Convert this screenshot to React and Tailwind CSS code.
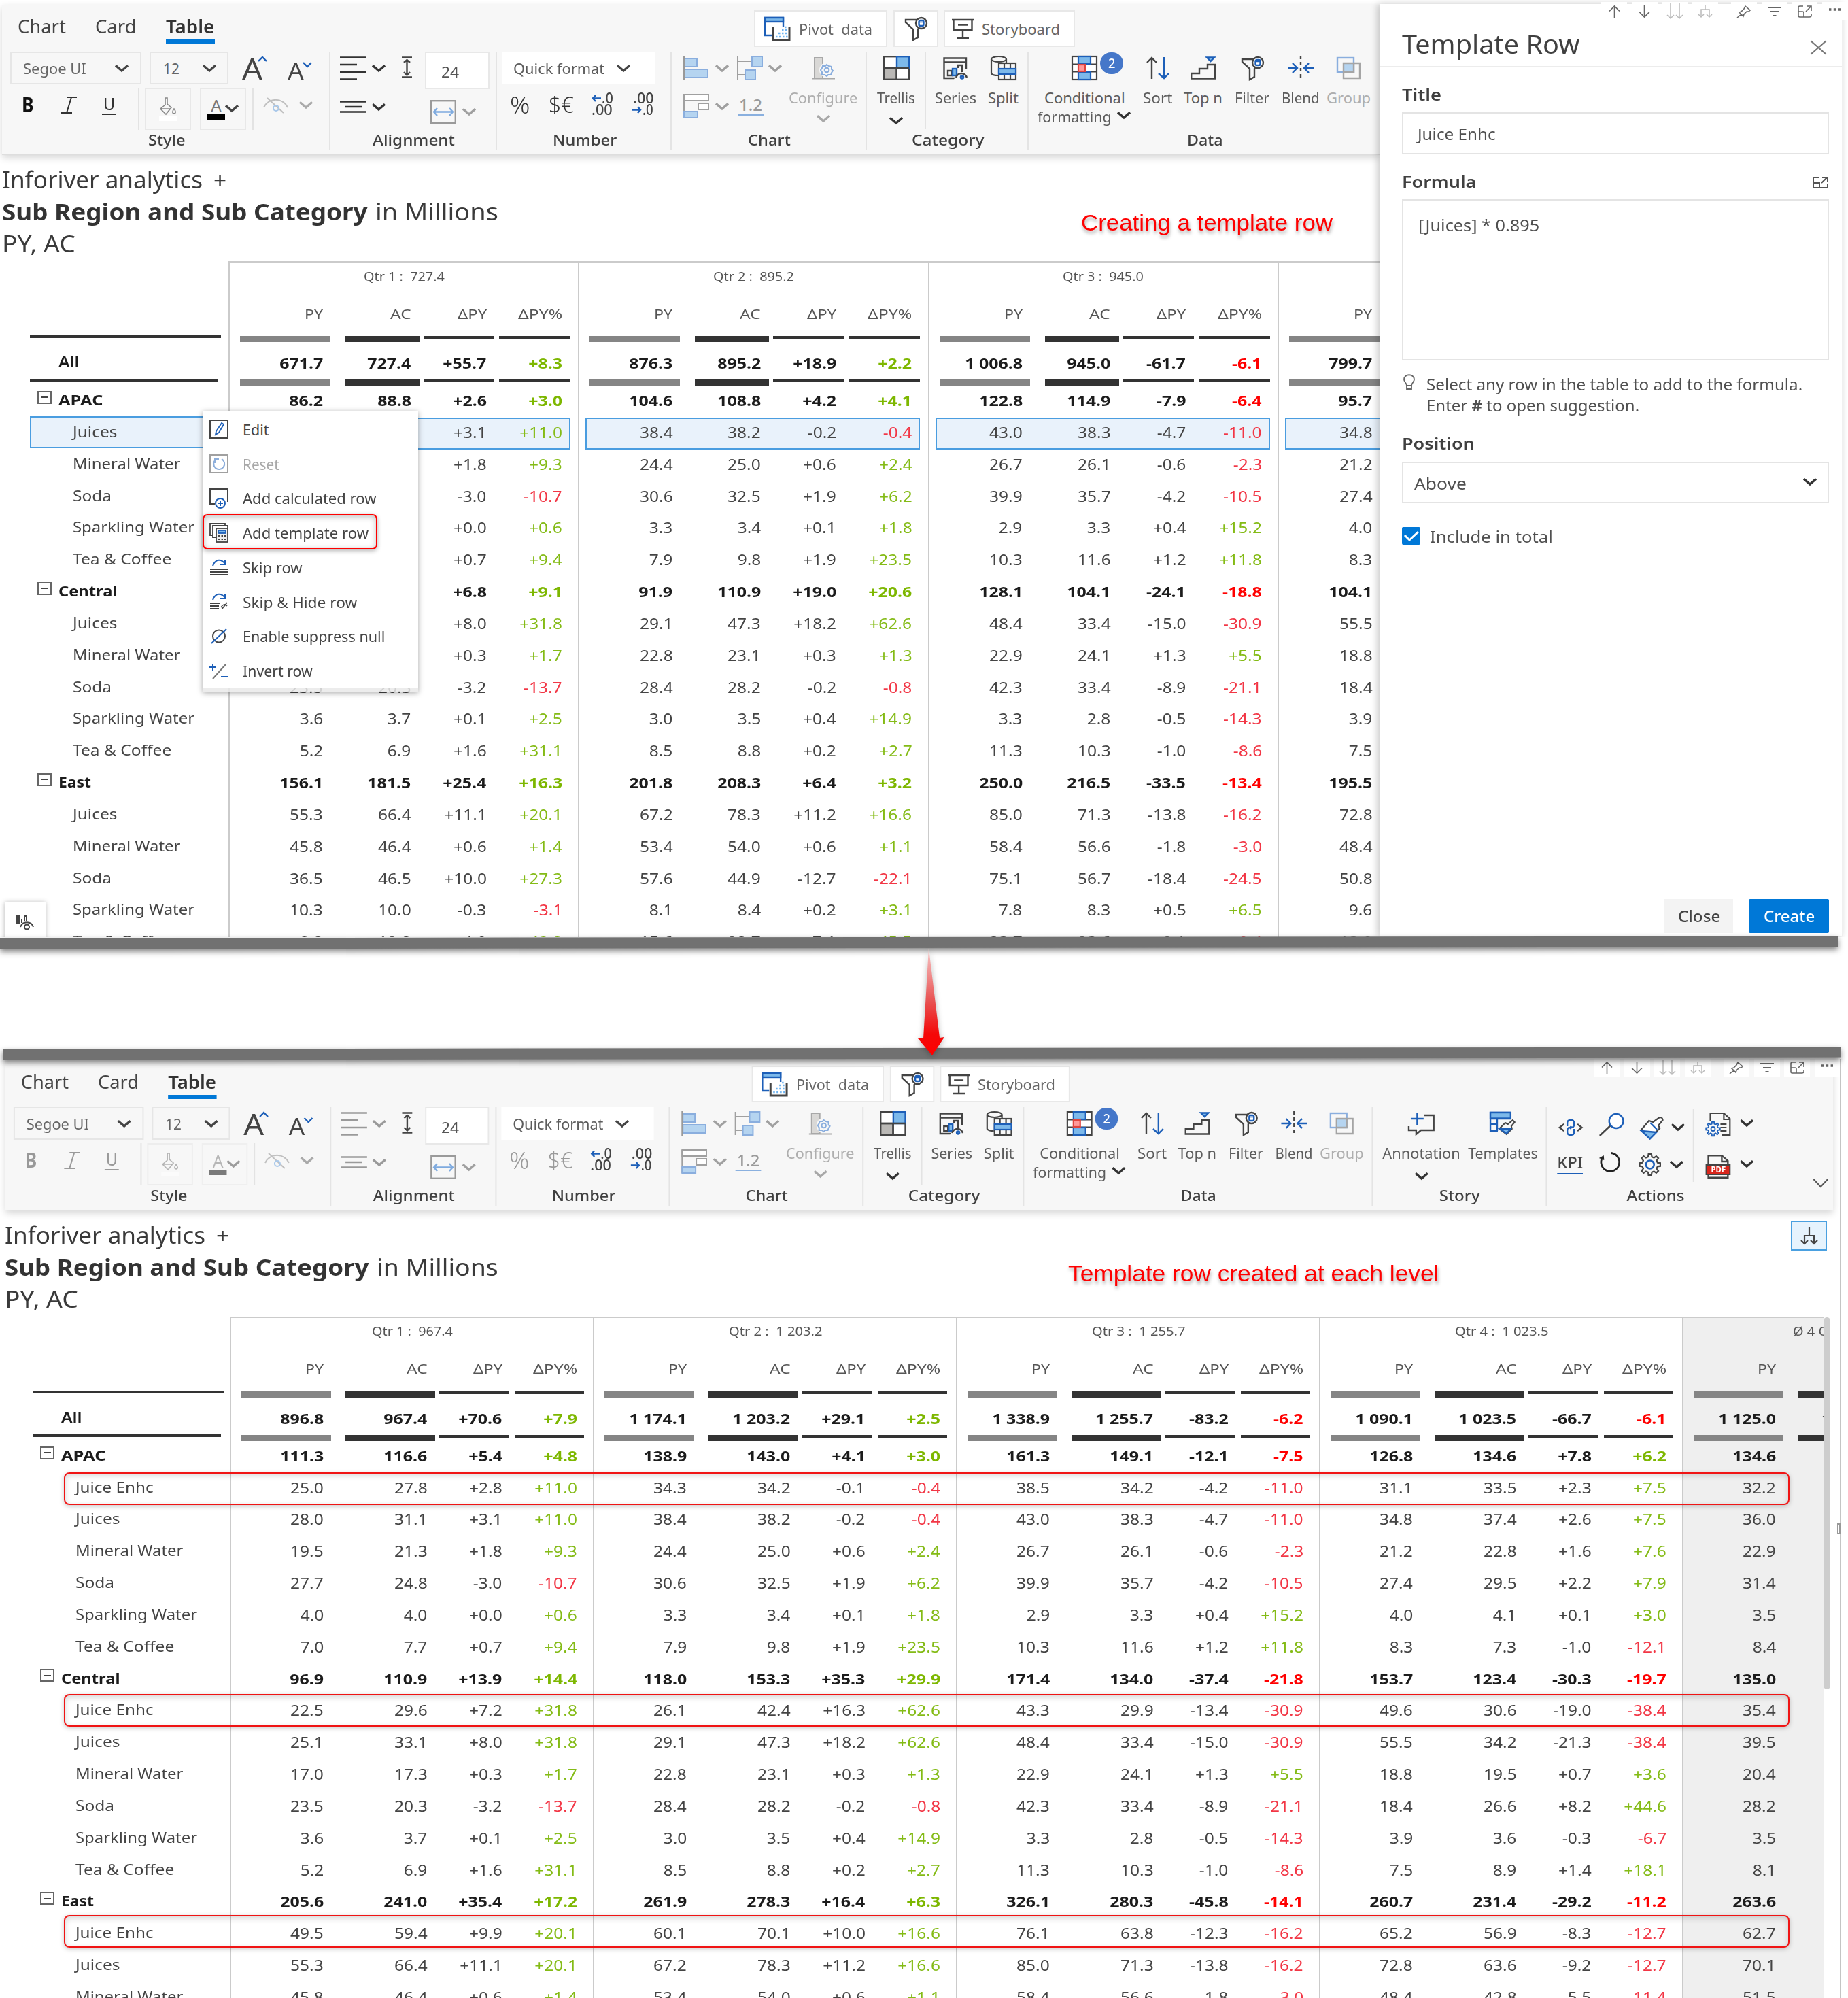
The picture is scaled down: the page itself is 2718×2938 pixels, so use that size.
import React, { useLayoutEffect, useRef } from "react";

/* Text stretched horizontally so that it spans exactly w pixels. */
function T({ w, className = "", children }) {
  const ref = useRef(null);
  useLayoutEffect(() => {
    ref.current.style.transform = `scaleX(${w / ref.current.offsetWidth})`;
  }, [w, children]);
  return (
    <span className={`inline-block shrink-0 whitespace-pre leading-none ${className}`} style={{ width: w }}>
      <span ref={ref} className="inline-block origin-left">{children}</span>
    </span>
  );
}

function Svg({ w, h, sw = 2.4, className = "", children }) {
  return (
    <svg width={w} height={h} viewBox={`0 0 ${w} ${h}`} fill="none" stroke="currentColor" strokeWidth={sw} className={`shrink-0 overflow-visible ${className}`}>
      {children}
    </svg>
  );
}

const Chev = ({ className = "" }) => (
  <Svg w={20} h={11} sw={3.4} className={className}><path d="M1 1.2 L10 9 L19 1.2" /></Svg>
);

const BLUE = "#1d5fb8";
const SKY = "#7db9ea";

/* ---------- ribbon icons ---------- */
const PivotIcon = () => (
  <Svg w={40} h={37} className="text-[#1d5fb8]">
    <path d="M12 28 H2 V2 H29 V15" /><rect x="2" y="2" width="27" height="6" fill={SKY} />
    <path d="M14 16 V35 H38 V16" stroke="#444" strokeWidth="3" />
    <path d="M18 30 H36 M22 25 H36 M27 20 H36 M31 16 H36" stroke="#6db3f0" strokeDasharray="2.5 2.5" />
  </Svg>
);
const FunnelIcon = () => (
  <Svg w={34} h={35} className="text-[#444]">
    <path d="M19 4 H2 V8 L13 18 V34 L20 30 V18 L22 15" />
    <circle cx="25" cy="9" r="8" fill="#fff" />
    <rect x="21.5" y="5" width="7" height="8" rx="2" stroke={BLUE} /><path d="M21.5 7.5 H28.5" stroke={BLUE} strokeWidth="1.5" />
  </Svg>
);
const BoardIcon = () => (
  <Svg w={32} h={31} className="text-[#444]">
    <path d="M0 2 H32 M2.5 2 V17 H29.5 V2 M9 9.5 H23 M16 17 V29 M7 29 H25" />
  </Svg>
);
const FillIcon = () => (
  <Svg w={26} h={36} sw={1.6} className="text-[#888]">
    <path d="M9 2 V12 L2 18 L10 26 L18 16 L12 11 V2 Z M3 18 H17" /><path d="M22 18 C19 22 19 24 22 25 C25 24 25 22 22 18Z" />
    <rect x="0" y="29" width="26" height="7" fill="#fff" stroke="none" />
  </Svg>
);
const EyeIcon = () => (
  <Svg w={37} h={24} sw={2} className="text-[#c0c0c0]">
    <path d="M1 15 C8 0 29 0 36 15 M6 1 L30 23" /><circle cx="19" cy="16" r="4" stroke="#a9c8ea" />
  </Svg>
);
const LinesIcon = ({ center }) => (
  <Svg w={39} h={center ? 18 : 35}>
    {center ? <path d="M0 1.5 H39 M7 9 H32 M0 16.5 H39" /> : <path d="M0 1.5 H39 M0 12 H25 M0 23 H39 M0 33.5 H25" />}
  </Svg>
);
const HeightIcon = () => (
  <Svg w={15} h={32} sw={2.4} className="text-[#444]"><path d="M0 1.5 H15 M0 30.5 H15 M7.5 5 V27 M3 9 L7.5 5 L12 9 M3 23 L7.5 27.5 L12 23" /></Svg>
);
const MergeIcon = () => (
  <Svg w={38} h={35} className="text-[#9a9a9a]">
    <rect x="1.2" y="1.2" width="35.6" height="32.6" /><path d="M5 17.5 H33 M10 12 L5 17.5 L10 23 M28 12 L33 17.5 L28 23" stroke="#7fabdf" />
  </Svg>
);
const DecimalIcon = ({ more }) => (
  <div className="flex w-[32px] shrink-0 flex-col text-[#444]">
    <div className="flex h-[17px] items-center justify-end">
      {more ? <Svg w={13} h={11} className="mr-px text-[#1d5fb8]"><path d="M0 5.5 H13 M5 1 L1 5.5 L5 10" /></Svg> : null}
      <T w={more ? 17 : 31} className="text-[21px] font-medium">{more ? ".0" : ".00"}</T>
    </div>
    <div className="flex h-[17px] items-center">
      {more ? null : <Svg w={13} h={11} className="mr-[2px] text-[#1d5fb8]"><path d="M0 5.5 H12 M8 1 L12 5.5 L8 10" /></Svg>}
      <T w={more ? 31 : 16} className="text-[21px] font-medium">{more ? ".00" : ".0"}</T>
    </div>
  </div>
);
const BarsIcon = () => (
  <Svg w={37} h={36} sw={2} className="text-[#8aaede]">
    <rect x="2" y="4" width="18" height="12" fill="#b5d4f0" /><rect x="2" y="20" width="34" height="12" fill="#b5d4f0" /><path d="M1 0 V36" stroke="#999" />
  </Svg>
);
const TreeIcon = ({ className }) => (
  <Svg w={38} h={36} sw={2} className={`text-[#8aaede] ${className}`}>
    <path d="M1 1 V35 M1 8 H22 M1 28 H12" stroke="#a0a0a0" /><rect x="22" y="1" width="15" height="15" fill="#b5d4f0" /><rect x="12" y="21" width="15" height="14" fill="#b5d4f0" />
  </Svg>
);
const LayoutIcon = () => (
  <Svg w={38} h={36} sw={2} className="text-[#a0a0a0]">
    <rect x="1" y="1" width="36" height="9" fill="#fff" /><rect x="22" y="14" width="15" height="9" fill="#fff" /><path d="M1 1 V35" /><rect x="1" y="26" width="20" height="9" stroke="#8aaede" fill="#b5d4f0" />
  </Svg>
);
const ConfigIcon = () => (
  <Svg w={34} h={33} sw={2} className="text-[#a8a8a8]">
    <rect x="4" y="1" width="12" height="30" fill="#d9d8d6" /><path d="M0 31.5 H34" /><circle cx="22" cy="19" r="11" fill="#f7f7f7" stroke="none" />
    <path d="M22 11 L25 13 L29 14 V18 L31 20 L29 23 L28 26 L24 26 L22 28 L19 26 L15 26 V22 L13 19 L15 16 L16 13 L20 13 Z" stroke="#8aaede" /><circle cx="22" cy="19" r="3.3" stroke="#8aaede" />
  </Svg>
);
const TrellisIcon = () => (
  <Svg w={39} h={36} className="text-[#444]">
    <rect x="1.2" y="1.2" width="36.6" height="33.6" fill="#fff" /><rect x="1.2" y="18" width="18.5" height="16.8" fill="#bab8b5" />
    <rect x="20" y="1.2" width="17.8" height="16.8" fill={SKY} stroke={BLUE} /><path d="M19.7 18 V35 M1 18 H38" />
  </Svg>
);
const SeriesIcon = () => (
  <Svg w={37} h={33} className="text-[#444]">
    <path d="M18 31 H1.5 V1.5 H34 V18 M1.5 7.5 H34 M7 27 V20 H13 V27 Z M22 16 V12 H28 V22" /><rect x="14" y="17" width="6" height="10" fill={SKY} stroke={BLUE} />
    <path d="M16 33 C20 22 33 22 37 33 Z" fill="#f7f7f7" stroke="none" /><path d="M19 30 C22 22 32 22 35 30" /><circle cx="28" cy="29.5" r="1.8" stroke={BLUE} strokeWidth="3" />
  </Svg>
);
const SplitIcon = () => (
  <Svg w={38} h={36} sw={2.2} className="text-[#444]">
    <ellipse cx="12" cy="5" rx="11" ry="4" /><path d="M1 5 V26 C2 28 6 29 11 29 M23 5 V11" />
    <rect x="12" y="11" width="25" height="24" fill="#f7f7f7" /><path d="M20 11 V35 M29 11 V35" /><rect x="12" y="19" width="25" height="8" fill={SKY} stroke={BLUE} />
  </Svg>
);
const CondIcon = () => (
  <Svg w={38} h={36} sw={2.2} className="text-[#444]">
    <rect x="1" y="1" width="36" height="34" fill="#fff" /><path d="M1 12.5 H37 M1 23.5 H37" />
    <rect x="10" y="1" width="18" height="11" fill={SKY} stroke={BLUE} /><rect x="10" y="24" width="18" height="11" fill={SKY} stroke={BLUE} /><rect x="10" y="13" width="10" height="10" fill="#ff9a9a" stroke="#e0443e" />
  </Svg>
);
const SortIcon = () => (
  <Svg w={34} h={34} className="text-[#444]"><path d="M8 33 V2 M1 9 L8 2 L15 9" /><path d="M26 1 V31 M18 25 L26 32 L33 25" stroke={BLUE} /></Svg>
);
const TopIcon = () => (
  <Svg w={38} h={34} className="text-[#444]"><path d="M1.2 32.5 V25 H13 V18 H25 V12 H36 V32.5 Z" /><path d="M24 1.5 H35 L29.5 7 Z" stroke={BLUE} fill={SKY} /></Svg>
);
const BlendIcon = () => (
  <Svg w={40} h={36} className="text-[#1d5fb8]"><path d="M20 0 V36" stroke="#444" strokeDasharray="5 4" /><path d="M1 18 H14 M8 11 L15 18 L8 25 M39 18 H26 M32 11 L25 18 L32 25" /></Svg>
);
const GroupIcon = () => (
  <Svg w={35} h={32} className="text-[#a5a5a5]"><rect x="1" y="1" width="24" height="21" stroke="#8aaede" /><rect x="10" y="9" width="15" height="13" fill="#b5d4f0" stroke="none" /><path d="M10 9 H34 V31 H10 Z M25 9 V22 H10" /></Svg>
);
const AnnotIcon = () => (
  <Svg w={39} h={33} className="text-[#444]"><path d="M24 4 H38 V26 H19 L12 32 V26 H1 V20" /><path d="M4 9 H23 M13.5 0 V18" stroke={BLUE} /></Svg>
);
const TemplIcon = () => (
  <Svg w={39} h={34} className="text-[#1d5fb8]">
    <path d="M1 1 V28 H12 M11 9 V28 M1 18 H11 M1 9 V1 H31 V10 H1" /><rect x="1" y="1" width="30" height="8.5" fill={SKY} />
    <path d="M14 25 L23 16 L27 18 L34 12 L37 15 L32 21 L33 25 L25 33 Z" fill="#f7f7f7" stroke="#444" strokeWidth="2" /><path d="M15 25 H31 L25 32 Z" fill={SKY} />
  </Svg>
);
const CodeIcon = () => (
  <Svg w={36} h={24} className="text-[#444]"><path d="M8 7 L1.5 12 L8 17 M28 7 L34.5 12 L28 17" /><path d="M13 10 V5 Q13 1 18 1 Q23 1 23 5 V8 Q23 12 19 12 L17 14 M23 14 V19 Q23 23 18 23 Q13 23 13 19 V16 Q13 12 17 12 L19 10" stroke={BLUE} /></Svg>
);
const SearchIcon = () => (
  <Svg w={37} h={34} className="text-[#444]"><path d="M1 33 L17 18" /><circle cx="25.5" cy="11.5" r="10.5" stroke={BLUE} fill="#fff" /></Svg>
);
const BrushIcon = () => (
  <Svg w={36} h={34} className="text-[#444]">
    <path d="M2 20 L14 6 L20 8 L29 1.5 Q34 0 34.5 5 L28 13 L30 17 L16 31 Z" fill="#fff" strokeWidth="2.2" /><path d="M3 21 L25 23 L15.5 32.5 Z" fill={SKY} stroke={BLUE} /><path d="M16 9 L26 19" stroke={BLUE} />
  </Svg>
);
const RefreshIcon = () => (
  <Svg w={33} h={30} sw={2.8} className="text-[#222]"><path d="M18 1.5 A13.5 13.5 0 1 1 5 8" /><path d="M0 9 L7 5 L7.5 12 Z" fill="#222" stroke="none" /></Svg>
);
function gearPath(cx, cy, r1, r2, n) {
  const p = [];
  for (let i = 0; i < n; i++) {
    const a = (i / n) * Math.PI * 2;
    const s = Math.PI / n;
    [[-0.62, r1], [-0.36, r2], [0.36, r2], [0.62, r1]].forEach(([k, r]) => p.push(`${(cx + r * Math.cos(a + k * s)).toFixed(1)} ${(cy + r * Math.sin(a + k * s)).toFixed(1)}`));
  }
  return `M${p.join("L")}Z`;
}
const GearIcon = () => (
  <Svg w={35} h={31} sw={2.2} className="text-[#444]"><path d={gearPath(17.5, 15.5, 11.5, 15.5, 8)} /><circle cx="17.5" cy="15.5" r="6" stroke={BLUE} strokeWidth="2.6" /></Svg>
);
const DocIcon = () => (
  <Svg w={37} h={34} sw={2.2} className="text-[#444]">
    <path d="M7 12 V1 H27 L36 9 V33 H24 M27 1 V10 H36 M22 17 H31 M22 22 H31 M22 27 H31" /><path d={gearPath(11, 24, 7.5, 10.5, 8)} stroke={BLUE} strokeWidth="1.8" /><circle cx="11" cy="24" r="3" stroke={BLUE} strokeWidth="1.8" />
  </Svg>
);
const PdfIcon = () => (
  <div className="relative h-[35px] w-[37px] shrink-0">
    <Svg w={37} h={35} sw={2.4} className="text-[#444]">
      <path d="M4 16 V1.2 H24 L33 9 V16 M24 1 V10 H33 M4 28 V33.8 H33 V28" /><rect x="1" y="15" width="35" height="14" fill="#d9261c" strokeWidth="2" />
    </Svg>
    <T w={22} className="absolute left-[8px] top-[16px] text-[12px] font-bold text-white">PDF</T>
  </div>
);

/* ---------- ribbon ---------- */
function Group({ label, lw, className, labelClass = "", last, children }) {
  return (
    <div className={`flex h-[145px] shrink-0 flex-col ${last ? "" : "border-r-2 border-[#e4e4e4]"} ${className}`}>
      <div className="h-[119px]">{children}</div>
      <div className={`flex h-[22px] items-center justify-center text-[#404040] ${labelClass}`}><T w={lw} className="text-[21.5px] font-medium">{label}</T></div>
    </div>
  );
}
const Row1 = ({ children }) => <div className="flex h-[48px] items-center">{children}</div>;
const Row2 = ({ children }) => <div className="flex h-[71px] items-center">{children}</div>;

function Tool({ icon, label, w, className = "", muted, chev }) {
  return (
    <div className={`flex shrink-0 flex-col items-center ${className}`}>
      <div className="flex h-[48px] items-center">{icon}</div>
      <T w={w} className={`mt-[8px] text-[22px] ${muted ? "text-[#aeaeae]" : "text-[#5c5c5c]"}`}>{label}</T>
      {chev ? <Chev className={`${muted ? "mt-[15px] text-[#a8a8a8]" : "mt-[18px] text-[#333]"}`} /> : null}
    </div>
  );
}

function Ribbon({ full }) {
  const ink = full ? "text-[#9a9a9a]" : "text-[#333]";
  return (
    <div className={`h-[221px] origin-left border-b border-[#dedede] bg-[#f7f7f7] shadow-[0_4px_10px_rgba(0,0,0,0.16)] ${full ? "w-[2709px] scale-x-[0.9923]" : "w-[2026px]"}`}>
      <div className="flex h-[69px] items-start text-[27px] text-[#444]">
        <T w={71} className="ml-[23px] mt-[18px]">Chart</T>
        <T w={60} className="ml-[43px] mt-[18px]">Card</T>
        <div className="ml-[44px] mt-[18px] flex flex-col">
          <T w={71} className="font-semibold text-[#333]">Table</T>
          <div className="mt-[6px] h-[6px] w-[72px] bg-[#0078d7]" />
        </div>
        <div className="ml-[793px] mt-[8px] flex h-[54px] w-[196px] items-center border-2 border-[#e8e8e8] bg-white pl-[12px] text-[22px] text-[#666]">
          <PivotIcon /><T w={108} className="ml-[12px]">Pivot  data</T>
        </div>
        <div className="ml-[9px] mt-[8px] flex h-[54px] w-[66px] items-center justify-center border-2 border-[#e8e8e8] bg-white"><FunnelIcon /></div>
        <div className="ml-[8px] mt-[8px] flex h-[54px] w-[193px] items-center border-2 border-[#e8e8e8] bg-white pl-[10px] text-[22px] text-[#666]">
          <BoardIcon /><T w={115} className="ml-[12px]">Storyboard</T>
        </div>
      </div>

      <div className="flex">
        <Group label="Style" lw={55} className="w-[483px]" labelClass="pl-[4px]">
          <Row1>
            <div className="ml-[12px] flex h-[48px] w-[193px] items-center border-2 border-[#e6e6e6] pl-[17px] text-[21px] text-[#666]"><T w={93} className="mt-[2px]">Segoe UI</T><Chev className="ml-[42px] text-[#444]" /></div>
            <div className="ml-[12px] flex h-[48px] w-[116px] items-center border-2 border-[#e6e6e6] pl-[18px] text-[21px] text-[#666]"><T w={24} className="mt-[2px]">12</T><Chev className="ml-[34px] text-[#444]" /></div>
            <T w={30} className="ml-[20px] text-[44px] text-[#444]">A</T><Svg w={14} h={8} className="-ml-[7px] -mt-[27px] text-[#1d5fb8]"><path d="M1 7 L7 1 L13 7" /></Svg>
            <T w={24} className="ml-[30px] mt-[8px] text-[34px] text-[#444]">A</T><Svg w={14} h={8} className="-ml-[2px] -mt-[11px] text-[#1d5fb8]"><path d="M1 1 L7 7 L13 1" /></Svg>
          </Row1>
          <Row2>
            <T w={18} className={`-mt-[12px] ml-[29px] text-[31px] font-bold ${full ? "text-[#999]" : "text-[#111]"}`}>B</T>
            <Svg w={23} h={25} sw={2} className={`-mt-[10px] ml-[40px] ${ink}`}><path d="M8 1 H23 M0 24 H16 M15 1 L8 24" /></Svg>
            <div className={`-mt-[10px] ml-[37px] flex w-[21px] flex-col items-center border-b-2 border-current pb-[2px] ${ink}`}><T w={17} className="text-[25px] leading-[21px]">U</T></div>
            <div className="ml-[32px] h-[62px] w-[2px] bg-[#e3e3e3]" />
            <div className={`ml-[8px] flex h-[62px] w-[68px] items-center justify-center border-2 border-[#e8e8e8] ${full ? "opacity-60" : ""}`}><FillIcon /></div>
            <div className={`ml-[13px] flex h-[62px] w-[68px] items-center border-2 border-[#e8e8e8] pl-[9px] ${full ? "opacity-50" : ""}`}>
              <div className="flex flex-col items-center"><T w={16} className="text-[25px] text-[#777]">A</T><div className="h-[8px] w-[26px] bg-black" /></div>
              <Chev className="text-[#444]" />
            </div>
            <div className="ml-[9px] h-[62px] w-[2px] bg-[#e3e3e3]" />
            <div className="-mt-[10px] ml-[14px] flex items-center"><EyeIcon /><Chev className="ml-[16px] text-[#aaa]" /></div>
          </Row2>
        </Group>

        <Group label="Alignment" lw={121} className="w-[245px]" labelClass="pl-[2px]">
          <div className="flex">
            <div className={ink}>
              <div className="flex h-[48px] items-center pl-[14px]"><LinesIcon /><Chev className="ml-[8px]" /></div>
              <div className="flex h-[66px] items-center pl-[14px]"><LinesIcon center /><Chev className="ml-[8px]" /></div>
            </div>
            <div className="ml-[24px] mt-[7px]"><HeightIcon /></div>
            <div className="ml-[19px]">
              <div className="flex h-[55px] w-[95px] items-center border-2 border-[#e8e8e8] bg-white pl-[22px] pt-[2px] text-[22px] text-[#555]"><T w={26}>24</T></div>
              <div className="ml-[8px] mt-[16px] flex items-center"><MergeIcon /><Chev className="ml-[9px] text-[#a0a0a0]" /></div>
            </div>
          </div>
        </Group>

        <Group label="Number" lw={94} className="w-[257px]" labelClass="pl-[2px]">
          <Row1>
            <div className="ml-[7px] flex h-[48px] w-[226px] items-center bg-white pl-[17px] text-[21.5px] text-[#5c5c5c]"><T w={134} className="mt-[2px]">Quick format</T><Chev className="ml-[18px] text-[#444]" /></div>
          </Row1>
          <Row2>
            <T w={29} className={`-mt-[12px] ml-[19px] text-[35px] font-light ${ink}`}>%</T>
            <T w={37} className={`-mt-[12px] ml-[28px] text-[33px] font-light ${ink}`}>$€</T>
            <div className="-mt-[14px] ml-[26px]"><DecimalIcon more /></div>
            <div className="-mt-[14px] ml-[28px]"><DecimalIcon /></div>
          </Row2>
        </Group>

        <Group label="Chart" lw={63} className="w-[287px]" labelClass="pl-[2px]">
          <div className="flex">
            <div className="w-[172px] pl-[17px]">
              <Row1><BarsIcon /><Chev className="ml-[10px] text-[#a0a0a0]" /><TreeIcon className="ml-[12px]" /><Chev className="ml-[8px] text-[#a0a0a0]" /></Row1>
              <div className="flex h-[64px] items-center"><LayoutIcon /><Chev className="ml-[9px] text-[#a0a0a0]" />
                <div className="ml-[13px] flex h-[28px] w-[38px] flex-col items-center border-b-[2.5px] border-[#8ab0df]"><T w={34} className="text-[24px] font-medium text-[#9a9a9a]">1.2</T></div>
              </div>
            </div>
            <Tool icon={<ConfigIcon />} label="Configure" w={101} muted chev />
          </div>
        </Group>

        <Group label="Category" lw={106} className="w-[238px]" labelClass="pl-[2px]">
          <div className="flex">
            <Tool icon={<TrellisIcon />} label="Trellis" w={56} chev className="ml-[15px]" />
            <div className="ml-[14px] h-[114px] w-[2px] bg-[#e3e3e3]" />
            <Tool icon={<SeriesIcon />} label="Series" w={61} className="ml-[13px]" />
            <Tool icon={<SplitIcon />} label="Split" w={45} className="ml-[17px]" />
          </div>
        </Group>

        <Group label="Data" lw={53} className="w-[517px]" last={!full} labelClass="pl-[2px]">
          <div className="flex">
            <div className="ml-[13px] flex w-[140px] flex-col">
              <div className="ml-[50px] flex h-[48px] items-center"><CondIcon />
                <div className="-mt-[14px] ml-[4px] flex h-[32px] w-[34px] items-center justify-center rounded-full bg-[#4577c9] text-white"><T w={10} className="text-[20px] font-medium">2</T></div>
              </div>
              <T w={119} className="ml-[10px] mt-[8px] text-[22px] text-[#5c5c5c]">Conditional</T>
              <div className="mt-[6px] flex items-center"><T w={109} className="text-[22px] text-[#5c5c5c]">formatting</T><Chev className="-mt-[3px] ml-[8px] text-[#333]" /></div>
            </div>
            <Tool icon={<SortIcon />} label="Sort" w={43} className="ml-[15px]" />
            <Tool icon={<TopIcon />} label="Top n" w={57} className="ml-[17px]" />
            <Tool icon={<FunnelIcon />} label="Filter" w={51} className="ml-[18px]" />
            <Tool icon={<BlendIcon />} label="Blend" w={56} className="ml-[18px]" />
            <Tool icon={<GroupIcon />} label="Group" w={65} muted className="ml-[10px]" />
          </div>
        </Group>

        {full ? (
          <>
            <Group label="Story" lw={61} className="w-[258px]">
              <div className="flex">
                <Tool icon={<AnnotIcon />} label="Annotation" w={115} chev className="ml-[14px]" />
                <Tool icon={<TemplIcon />} label="Templates" w={103} className="ml-[12px]" />
              </div>
            </Group>
            <Group label="Actions" lw={86} className="w-[424px]" labelClass="mr-[102px]" last>
              <div className="flex text-[#333]">
                <div className="w-[202px] pt-[3px]">
                  <div className="flex h-[52px] items-center"><div className="ml-[17px] mt-[2px]"><CodeIcon /></div><div className="ml-[24px] mt-[-6px]"><SearchIcon /></div><div className="ml-[23px] mt-[4px]"><BrushIcon /></div><Chev className="ml-[11px]" /></div>
                  <div className="flex h-[62px] items-center">
                    <div className="ml-[15px] mt-[-4px] flex w-[39px] flex-col border-b-[2.5px] border-[#1d5fb8] pb-[4px]"><T w={38} className="text-[24px] font-medium text-[#444]">KPI</T></div>
                    <div className="-mt-[11px] ml-[24px]"><RefreshIcon /></div><div className="ml-[25px] mt-[-3px]"><GearIcon /></div><Chev className="ml-[12px] mt-[-4px]" />
                  </div>
                </div>
                <div className="ml-[14px] mt-[3px] h-[107px] w-[2px] bg-[#e3e3e3]" />
                <div className="ml-[17px]">
                  <div className="flex h-[48px] items-center pt-[2px]"><DocIcon /><Chev className="ml-[14px] mt-[-4px]" /></div>
                  <div className="mt-[22px] flex items-center"><PdfIcon /><Chev className="ml-[14px] mt-[-8px]" /></div>
                </div>
                <div className="ml-[88px] mt-[105px]"><Svg w={23} h={13} sw={2} className="text-[#555]"><path d="M1 1 L11.5 12 L22 1" /></Svg></div>
              </div>
            </Group>
          </>
        ) : null}
      </div>
    </div>
  );
}

/* ---------- icon strip above a visual ---------- */
const stripIcons = [
  <Svg w={17} h={18} sw={1.6}><path d="M8.5 18 V1 M1 8.5 L8.5 1 L16 8.5" /></Svg>,
  <Svg w={17} h={18} sw={1.6}><path d="M8.5 0 V17 M1 9.5 L8.5 17 L16 9.5" /></Svg>,
  <Svg w={23} h={23} sw={1.5} className="text-[#bbb]"><path d="M5 0 V22 M0 17 L5 22 L10 17 M18 0 V22 M13 17 L18 22 L23 17" /></Svg>,
  <Svg w={20} h={18} sw={1.5} className="text-[#bbb]"><path d="M10 0 V6 M4 17 V6 H16 V17 M0 13 L4 17 L8 13 M12 13 L16 17 L20 13" /></Svg>,
  <Svg w={20} h={18} sw={1.6}><path d="M12 1 L19 7 L17 9 L14 9 L10 13 L9 16 L3 10 L6 9 L10 5 Z M6 13 L0 18" /></Svg>,
  <Svg w={20} h={14} sw={1.8}><path d="M0 1 H20 M4 7 H16 M7.5 13 H12.5" /></Svg>,
  <Svg w={21} h={18} sw={1.6}><path d="M8 1 H3 Q1 1 1 3 V15 Q1 17 3 17 H17 Q20 17 20 15 V12 M13 1 H20 V8 M20 1 L12 9 M1 9 H7 Q9 9 9 11 V17" /></Svg>,
  <Svg w={17} h={4} sw={3.4}><path d="M0 2 H3.4 M6.8 2 H10.2 M13.6 2 H17" /></Svg>,
];
function Strip({ className }) {
  return (
    <div className={`absolute flex gap-[6.5px] text-[#666] ${className}`}>
      {stripIcons.map((ic, i) => (
        <div key={i} className={`flex h-[27px] w-[38px] items-center justify-center bg-white ${i === 4 ? "ml-[13px]" : ""} ${i === 7 ? "pb-[6px]" : ""}`}>{ic}</div>
      ))}
    </div>
  );
}

/* ---------- data ---------- */
const q = (s) => s.split("|").map((p) => p.trim().split(",").map((v) => v.trim()));
const kid = (label, s) => ({ label, v: q(s) });
const apac = [
  kid("Juices", "28.0,31.1,+3.1,+11.0|38.4,38.2,-0.2,-0.4|43.0,38.3,-4.7,-11.0|34.8,37.4,+2.6,+7.5|36.0"),
  kid("Mineral Water", "19.5,21.3,+1.8,+9.3|24.4,25.0,+0.6,+2.4|26.7,26.1,-0.6,-2.3|21.2,22.8,+1.6,+7.6|22.9"),
  kid("Soda", "27.7,24.8,-3.0,-10.7|30.6,32.5,+1.9,+6.2|39.9,35.7,-4.2,-10.5|27.4,29.5,+2.2,+7.9|31.4"),
  kid("Sparkling Water", "4.0,4.0,+0.0,+0.6|3.3,3.4,+0.1,+1.8|2.9,3.3,+0.4,+15.2|4.0,4.1,+0.1,+3.0|3.5"),
  kid("Tea & Coffee", "7.0,7.7,+0.7,+9.4|7.9,9.8,+1.9,+23.5|10.3,11.6,+1.2,+11.8|8.3,7.3,-1.0,-12.1|8.4"),
];
const central = [
  kid("Juices", "25.1,33.1,+8.0,+31.8|29.1,47.3,+18.2,+62.6|48.4,33.4,-15.0,-30.9|55.5,34.2,-21.3,-38.4|39.5"),
  kid("Mineral Water", "17.0,17.3,+0.3,+1.7|22.8,23.1,+0.3,+1.3|22.9,24.1,+1.3,+5.5|18.8,19.5,+0.7,+3.6|20.4"),
  kid("Soda", "23.5,20.3,-3.2,-13.7|28.4,28.2,-0.2,-0.8|42.3,33.4,-8.9,-21.1|18.4,26.6,+8.2,+44.6|28.2"),
  kid("Sparkling Water", "3.6,3.7,+0.1,+2.5|3.0,3.5,+0.4,+14.9|3.3,2.8,-0.5,-14.3|3.9,3.6,-0.3,-6.7|3.5"),
  kid("Tea & Coffee", "5.2,6.9,+1.6,+31.1|8.5,8.8,+0.2,+2.7|11.3,10.3,-1.0,-8.6|7.5,8.9,+1.4,+18.1|8.1"),
];
const east = [
  kid("Juices", "55.3,66.4,+11.1,+20.1|67.2,78.3,+11.2,+16.6|85.0,71.3,-13.8,-16.2|72.8,63.6,-9.2,-12.7|70.1"),
  kid("Mineral Water", "45.8,46.4,+0.6,+1.4|53.4,54.0,+0.6,+1.1|58.4,56.6,-1.8,-3.0|48.4,42.8,-5.5,-11.4|51.5"),
  kid("Soda", "36.5,46.5,+10.0,+27.3|57.6,44.9,-12.7,-22.1|75.1,56.7,-18.4,-24.5|50.8"),
  kid("Sparkling Water", "10.3,10.0,-0.3,-3.1|8.1,8.4,+0.2,+3.1|7.8,8.3,+0.5,+6.5|9.6"),
  kid("Tea & Coffee", "8.2,12.2,+4.0,+48.2|15.6,22.7,+7.1,+45.5|23.7,23.6,-0.1,-0.4|13.9"),
];
const head = (label, s) => ({ label, v: q(s), bold: true });
const topRows = [
  head("APAC", "86.2,88.8,+2.6,+3.0|104.6,108.8,+4.2,+4.1|122.8,114.9,-7.9,-6.4|95.7"),
  { ...apac[0], sel: true }, ...apac.slice(1),
  head("Central", "74.4,81.3,+6.8,+9.1|91.9,110.9,+19.0,+20.6|128.1,104.1,-24.1,-18.8|104.1"),
  ...central,
  head("East", "156.1,181.5,+25.4,+16.3|201.8,208.3,+6.4,+3.2|250.0,216.5,-33.5,-13.4|195.5"),
  ...east,
];
const botRows = [
  head("APAC", "111.3,116.6,+5.4,+4.8|138.9,143.0,+4.1,+3.0|161.3,149.1,-12.1,-7.5|126.8,134.6,+7.8,+6.2|134.6"),
  kid("Juice Enhc", "25.0,27.8,+2.8,+11.0|34.3,34.2,-0.1,-0.4|38.5,34.2,-4.2,-11.0|31.1,33.5,+2.3,+7.5|32.2"),
  ...apac,
  head("Central", "96.9,110.9,+13.9,+14.4|118.0,153.3,+35.3,+29.9|171.4,134.0,-37.4,-21.8|153.7,123.4,-30.3,-19.7|135.0"),
  kid("Juice Enhc", "22.5,29.6,+7.2,+31.8|26.1,42.4,+16.3,+62.6|43.3,29.9,-13.4,-30.9|49.6,30.6,-19.0,-38.4|35.4"),
  ...central,
  head("East", "205.6,241.0,+35.4,+17.2|261.9,278.3,+16.4,+6.3|326.1,280.3,-45.8,-14.1|260.7,231.4,-29.2,-11.2|263.6"),
  kid("Juice Enhc", "49.5,59.4,+9.9,+20.1|60.1,70.1,+10.0,+16.6|76.1,63.8,-12.3,-16.2|65.2,56.9,-8.3,-12.7|62.7"),
  east[0], east[1],
];
const top = {
  titles: [["Qtr 1 :  727.4", 119], ["Qtr 2 :  895.2", 119], ["Qtr 3 :  945.0", 119], ["", 10]],
  all: q("671.7,727.4,+55.7,+8.3|876.3,895.2,+18.9,+2.2|1 006.8,945.0,-61.7,-6.1|799.7"),
  rows: topRows,
  rowClass: "h-[46.83px]",
  quarter: "w-[514.4px]",
  cells: ["w-[126px]", "w-[129.5px]", "w-[111px]", "w-[111.5px]"],
  bars: ["ml-[15px] w-[133px]", "ml-[22px] w-[109px]", "ml-[6px] w-[104px]", "ml-[7px] w-[105px]"],
};
const bottom = {
  titles: [["Qtr 1 :  967.4", 119], ["Qtr 2 :  1 203.2", 137], ["Qtr 3 :  1 255.7", 137], ["Qtr 4 :  1 023.5", 137], ["Ø 4 Quarters :  1 112.5", 210]],
  all: q("896.8,967.4,+70.6,+7.9|1 174.1,1 203.2,+29.1,+2.5|1 338.9,1 255.7,-83.2,-6.2|1 090.1,1 023.5,-66.7,-6.1|1 125.0,1 112.5"),
  rows: botRows,
  rowClass: "h-[46.83px]",
  quarter: "w-[534px]",
  cells: ["w-[125px]", "w-[152.5px]", "w-[110px]", "w-[110.5px]"],
  bars: ["ml-[15px] w-[132px]", "ml-[21px] w-[132px]", "ml-[6px] w-[103px]", "ml-[8px] w-[102px]"],
};
const labelW = { All: 31, APAC: 65, Central: 86, East: 48, Juices: 65, "Mineral Water": 159, Soda: 57, "Sparkling Water": 179, "Tea & Coffee": 145, "Juice Enhc": 115 };

/* ---------- table ---------- */
function Num({ v, i, bold, cell }) {
  const neg = v[0] === "-";
  let color = bold ? "text-[#1c1c1c]" : "text-[#444]";
  if (i === 3) color = neg ? (bold ? "text-[#ff0000]" : "text-[#f23645]") : bold ? "text-[#7db700]" : "text-[#84bb16]";
  return (
    <div className={`flex shrink-0 justify-end ${cell} ${color}`}>
      <span className={`origin-right whitespace-nowrap text-[21.5px] leading-none ${bold ? "scale-x-[1.16] font-bold" : "scale-x-[1.14]"}`}>{v}</span>
    </div>
  );
}
const barLook = ["h-[9px] bg-[#858585]", "h-[9px] bg-[#333]", "h-[4px] bg-[#333]", "h-[4px] bg-[#333]"];
const Bars = ({ t }) => (
  <div className="flex h-[9px] items-start">{t.bars.map((b, i) => <div key={i} className={`shrink-0 ${b} ${barLook[i]}`} />)}</div>
);

function Quarter({ t, i, shade }) {
  const heads = ["PY", "AC", "ΔPY", "ΔPY%"];
  const hw = [27, 31, 43, 65];
  return (
    <div className={`shrink-0 border-l-2 border-t-2 border-[#cbcbcb] ${t.quarter} ${shade ? "bg-[#efefef]" : ""}`}>
      <div className="flex h-[41px] items-center justify-center text-[17.5px] text-[#555]"><T w={t.titles[i][1]}>{t.titles[i][0]}</T></div>
      <div className="flex h-[67px] items-center pl-[11px] pt-px text-[#555]">
        {heads.map((h, k) => <div key={h} className={`flex shrink-0 justify-end ${t.cells[k]}`}><T w={hw[k]} className="text-[20.5px]">{h}</T></div>)}
      </div>
      <Bars t={t} />
      <div className="flex h-[55px] items-center pl-[11px] pt-[7px]">{t.all[i].map((v, k) => <Num key={k} v={v} i={k} bold cell={t.cells[k]} />)}</div>
      <Bars t={t} />
      {t.rows.map((r, n) => (
        <div key={n} className={`ml-[9px] flex w-[492px] items-center border-2 pb-[3px] ${t.rowClass} ${r.sel ? "border-[#4a9de0] bg-[#e9f2fb]" : "border-transparent"}`}>
          {(r.v[i] || []).map((v, k) => <Num key={k} v={v} i={k} bold={r.bold} cell={t.cells[k]} />)}
        </div>
      ))}
    </div>
  );
}

function Labels({ t, full }) {
  return (
    <div className={`shrink-0 ${full ? "w-[338px] pl-[48px]" : "w-[336px] pl-[44px]"}`}>
      <div className="h-[109px]" />
      <div className="h-[4px] w-[281px] bg-[#333]" />
      <div className="flex h-[60px] items-center pl-[42px] pt-[10px]"><T w={31} className="text-[21.5px] font-semibold text-[#1c1c1c]">All</T></div>
      <div className="h-[4px] w-[277px] bg-[#333]" />
      <div className="h-[4px]" />
      {t.rows.map((r, n) => (
        <div key={n} className={`flex items-center border-2 ${t.rowClass} ${r.sel ? "border-[#4a9de0] bg-[#e9f2fb]" : "border-transparent"}`}>
          {r.bold ? (
            <>
              <div className="-mt-[8px] ml-[9px] flex h-[19px] w-[21px] items-center justify-center border-2 border-[#666]"><div className="h-[2px] w-[11px] bg-[#444]" /></div>
              <T w={labelW[r.label]} className="-mt-px ml-[10px] text-[21.5px] font-bold text-[#1c1c1c]">{r.label}</T>
            </>
          ) : (
            <T w={labelW[r.label]} className="-mt-px ml-[61px] text-[21.5px] text-[#444]">{r.label}</T>
          )}
        </div>
      ))}
    </div>
  );
}

function Titles({ full }) {
  return (
    <div className={`flex flex-col pt-[13px] text-[34.5px] text-[#3a3a3a] ${full ? "h-[160px] pl-[7px]" : "h-[156px] pl-[3px]"}`}>
      <div className="flex h-[47px] items-center"><T w={295}>Inforiver analytics</T><T w={19} className="ml-[16px] text-[30px]">+</T></div>
      <div className="flex h-[47px] items-center"><T w={full ? 535 : 537} className="font-bold text-[#333]">Sub Region and Sub Category</T><T w={full ? 179 : 181} className="ml-[12px]">in Millions</T></div>
      <div className="flex h-[47px] items-center"><T w={108}>PY, AC</T></div>
    </div>
  );
}

/* ---------- context menu ---------- */
const menu = [
  ["Edit", 39, <Svg w={28} h={28} sw={2}><rect x="1" y="1" width="26" height="26" /><path d="M9 22 L10 17 L18 5 L21 7 L14 19 Z" stroke={BLUE} strokeWidth="1.8" /></Svg>],
  ["Reset", 54, <Svg w={28} h={28} sw={2} className="opacity-50"><rect x="1" y="1" width="26" height="26" /><path d="M9 8 A8 8 0 1 0 18 7 M8 13 V7 H14" stroke={BLUE} strokeWidth="2" /></Svg>],
  ["Add calculated row", 197, <Svg w={28} h={30} sw={2}><path d="M8 23 H1 V1 H27 V20" /><circle cx="16" cy="22" r="7" stroke={BLUE} strokeWidth="2" /><path d="M12 22 H20 M16 18 V26" stroke={BLUE} strokeWidth="2" /></Svg>],
  ["Add template row", 185, <Svg w={28} h={29} sw={1.8}><path d="M5 18 H1 V1 H23 V4 M9 21 H5 V4 H27 V8" /><rect x="10" y="8" width="17" height="20" fill="#eee" /><rect x="13" y="11" width="11" height="4" fill={SKY} stroke={BLUE} /><path d="M13 19 H25 M13 24 H25" strokeDasharray="2.5 2" /></Svg>],
  ["Skip row", 88, <Svg w={26} h={23} sw={2}><path d="M0 14 H26 M0 18 H26 M0 22 H26" /><path d="M4 9 C8 -2 17 -1 22 6 M22 0 V7 H15" stroke={BLUE} /></Svg>],
  ["Skip & Hide row", 168, <Svg w={26} h={23} sw={2}><path d="M0 14 H15 M0 18 H13 M0 22 H13" /><path d="M4 9 C8 -2 17 -1 22 6 M22 0 V7 H15" stroke={BLUE} /><path d="M16 20 Q20 13 25 18 M17 23 L25 13" strokeWidth="1.6" /></Svg>],
  ["Enable suppress null", 209, <Svg w={26} h={23} sw={2}><ellipse cx="13" cy="11.5" rx="9" ry="9" /><path d="M2 22 L24 1" stroke={BLUE} /></Svg>],
  ["Invert row", 103, <Svg w={28} h={23} sw={2}><path d="M0 6 H10 M5 1 V11 M17 20 H28" stroke={BLUE} /><path d="M5 23 L24 2" stroke="#777" /></Svg>],
];
function Menu() {
  return (
    <div className="absolute left-[298px] top-[604px] h-[413px] w-[317px] bg-[#e9e9e9]/85 shadow-[0_2px_8px_rgba(0,0,0,0.35)]">
      <div className="h-[407px] bg-white pt-[2px]">
        {menu.map(([label, w, icon], i) => (
          <div key={label} className="flex h-[50.7px] items-center pl-[10px] text-[#444]">
            <div className="flex w-[28px] justify-center">{icon}</div>
            <T w={w} className={`ml-[21px] mt-px text-[21.5px] ${i === 1 ? "text-[#a8a8a8]" : "text-[#444]"}`}>{label}</T>
          </div>
        ))}
      </div>
      <div className="absolute left-0 top-[152px] h-[52px] w-[257px] rounded-[7px] border-[2.5px] border-[#f00] shadow-[0_2px_6px_rgba(0,0,0,0.3),inset_0_2px_8px_rgba(0,0,0,0.25)]" />
    </div>
  );
}

/* ---------- template row panel ---------- */
function Panel() {
  const field = "w-[628px] border-2 border-[#e4e4e4] flex shrink-0";
  return (
    <div className="z-10 mt-[6px] flex h-[1371px] w-[682px] shrink-0 flex-col border-r-2 border-[#f0f0f0] bg-white shadow-[-3px_0_10px_rgba(0,0,0,0.22)]">
      <div className="flex h-[93px] shrink-0 border-b-2 border-[#ececec] pl-[33px] text-[#404040]">
        <T w={261} className="mt-[40px] text-[37.5px]">Template Row</T>
        <Svg w={23} h={20} sw={2.2} className="ml-[340px] mt-[54px] text-[#777]"><path d="M0 0 L23 20 M23 0 L0 20" /></Svg>
      </div>
      <div className="flex flex-col pl-[33px] text-[#505050]">
        <T w={58} className="mt-[28px] text-[24px] font-semibold text-[#404040]">Title</T>
        <div className={`${field} mt-[14px] h-[62px] items-center pl-[21px] pt-[2px]`}><T w={115} className="text-[23px]">Juice Enhc</T></div>
        <div className="mt-[28px] flex h-[24px] items-center">
          <T w={109} className="text-[24px] font-semibold text-[#404040]">Formula</T>
          <Svg w={23} h={17} sw={2} className="ml-[495px] mt-[3px] text-[#555]"><path d="M9 1 H1 V16 H22 V11 M1 9 H10 V16 M14 1 H22 V7 M21 1 L13 9" /></Svg>
        </div>
        <div className={`${field} mt-[14px] h-[237px] pl-[22px] pt-[24px]`}><T w={178} className="text-[24px]">[Juices] * 0.895</T></div>
        <div className="mt-[20px] flex h-[64px]">
          <Svg w={17} h={23} sw={1.8} className="ml-[2px] text-[#666]"><path d="M5 17 C5 13 1 12 1 8 C1 -1 16 -1 16 8 C16 12 12 13 12 17 Z M5 17 V22 H12 V17" /></Svg>
          <div className="ml-[17px] mt-[4px] flex flex-col text-[23px]">
            <T w={553}>Select any row in the table to add to the formula.</T>
            <T w={313} className="mt-[8px]">Enter <b>#</b> to open suggestion.</T>
          </div>
        </div>
        <T w={107} className="mt-[26px] text-[24px] font-semibold text-[#404040]">Position</T>
        <div className={`${field} mt-[15px] h-[61px] items-center pl-[16px] pt-[2px]`}><T w={77} className="text-[24px]">Above</T><Chev className="-mt-[4px] ml-[495px] text-[#333]" /></div>
        <div className="mt-[34px] flex h-[28px] items-center">
          <div className="flex h-[26px] w-[27px] items-center justify-center rounded-[2px] bg-[#0078d7]"><Svg w={22} h={14} className="text-white" sw={3}><path d="M1 6 L8 13 L21 1" /></Svg></div>
          <T w={181} className="ml-[14px] mt-[2px] text-[24px]">Include in total</T>
        </div>
      </div>
      <div className="mt-auto mb-[5px] flex gap-[23px] pl-[419px] text-[23px] font-medium">
        <div className="flex h-[50px] w-[101px] items-center justify-center bg-[#f3f3f3] text-[#444]"><T w={62}>Close</T></div>
        <div className="flex h-[50px] w-[118px] items-center justify-center rounded-[2px] bg-[#0078d7] text-white"><T w={75}>Create</T></div>
      </div>
    </div>
  );
}

function Note({ w, className, children }) {
  return <div className={`absolute ${className}`}><T w={w} className="font-['Liberation_Sans',sans-serif] text-[34px] text-[#f00] [text-shadow:1px_4px_5px_rgba(0,0,0,0.35)]">{children}</T></div>;
}
const Slab = ({ className = "" }) => <div className={`z-20 h-[16px] w-[2703px] shrink-0 rotate-[-0.06deg] bg-[#717171] shadow-[0_4px_9px_rgba(0,0,0,0.5)] ${className}`} />;
const Ring = ({ className }) => <div className={`absolute left-[94px] h-[48px] w-[2538px] rounded-[8px] border-[2.5px] border-[#f01414] shadow-[0_2px_7px_rgba(0,0,0,0.22),inset_0_3px_9px_rgba(0,0,0,0.16)] ${className}`} />;

export default function App() {
  return (
    <div className="flex h-[2938px] w-[2718px] flex-col overflow-hidden bg-white font-['Noto_Sans',sans-serif]">
      <section className="relative flex h-[1378px] shrink-0 overflow-hidden">
        <div className="w-[2029px] shrink-0 overflow-hidden pt-[7px]">
          <div className="ml-[3px]"><Ribbon /></div>
          <Titles />
          <div className="flex">
            <Labels t={top} />
            {[0, 1, 2, 3].map((i) => <Quarter key={i} t={top} i={i} />)}
          </div>
        </div>
        <Panel />
        <Strip className="left-[2355px] top-[3px] z-20" />
        <Note w={370} className="left-[1590px] top-[310px]">Creating a template row</Note>
        <Menu />
        <div className="absolute left-[7px] top-[1327px] flex h-[60px] w-[60px] items-start bg-white pl-[17px] pt-[16px] shadow-[0_0_7px_rgba(0,0,0,0.3)]">
          <Svg w={26} h={26} sw={2} className="text-[#444]"><path d="M1 3 H4 V14 H1 Z M8 14 V8 M12 12 V4 H15 V12 M6 20 C9 11 22 11 25 20" /><circle cx="15.5" cy="20" r="3.5" /></Svg>
        </div>
      </section>
      <Slab />
      <div className="h-[147px] shrink-0 pl-[1350px]">
        <svg width="40" height="160" viewBox="0 0 40 160" className="relative z-30 overflow-visible drop-shadow-[0_2px_4px_rgba(0,0,0,0.3)]">
          <defs><linearGradient id="fade" x1="0" y1="0" x2="0" y2="1"><stop offset="0" stopColor="#f8c8c8" /><stop offset="0.5" stopColor="#e85050" /><stop offset="0.8" stopColor="#f40808" /><stop offset="1" stopColor="#ff0000" /></linearGradient></defs>
          <path d="M16 0 L32 132 L39 131 L21 158 L0 133 L8 133 Z" fill="url(#fade)" />
        </svg>
      </div>
      <Slab className="ml-[4px]" />
      <section className="relative flex h-[1381px] shrink-0 flex-col overflow-hidden">
        <div className="ml-[8px] mt-[2px]"><Ribbon full /></div>
        <Titles full />
        <div className="-mt-px flex w-[2682px] overflow-hidden">
          <Labels t={bottom} full />
          {[0, 1, 2, 3, 4].map((i) => <Quarter key={i} t={bottom} i={i} shade={i === 4} />)}
        </div>
        <Strip className="left-[2344px] top-[-1px]" />
        <div className="absolute left-[2706px] top-0 h-[1381px] w-[1.5px] bg-[#c4c4c4]" />
        <div className="absolute left-[2702px] top-[683px] h-[16px] w-[5px] border-2 border-[#999] bg-white" />
        <div className="absolute left-[2634px] top-[238px] flex h-[44px] w-[53px] items-center justify-center border-2 border-[#4aa0e0] bg-[#e6f3fd]">
          <Svg w={24} h={25} sw={2.2} className="text-[#444]"><path d="M12 0 V12 M5 24 V12 H19 V24 M0 19 L5 24 L10 19 M14 19 L19 24 L24 19" /></Svg>
        </div>
        <div className="absolute left-[2682px] top-[380px] h-[547px] w-[10px] rounded-full bg-[#cdcdcd]" />
        <Note w={545} className="left-[1571px] top-[298px]">Template row created at each level</Note>
        <Ring className="top-[608px]" />
        <Ring className="top-[934px]" />
        <Ring className="top-[1259px]" />
      </section>
    </div>
  );
}
